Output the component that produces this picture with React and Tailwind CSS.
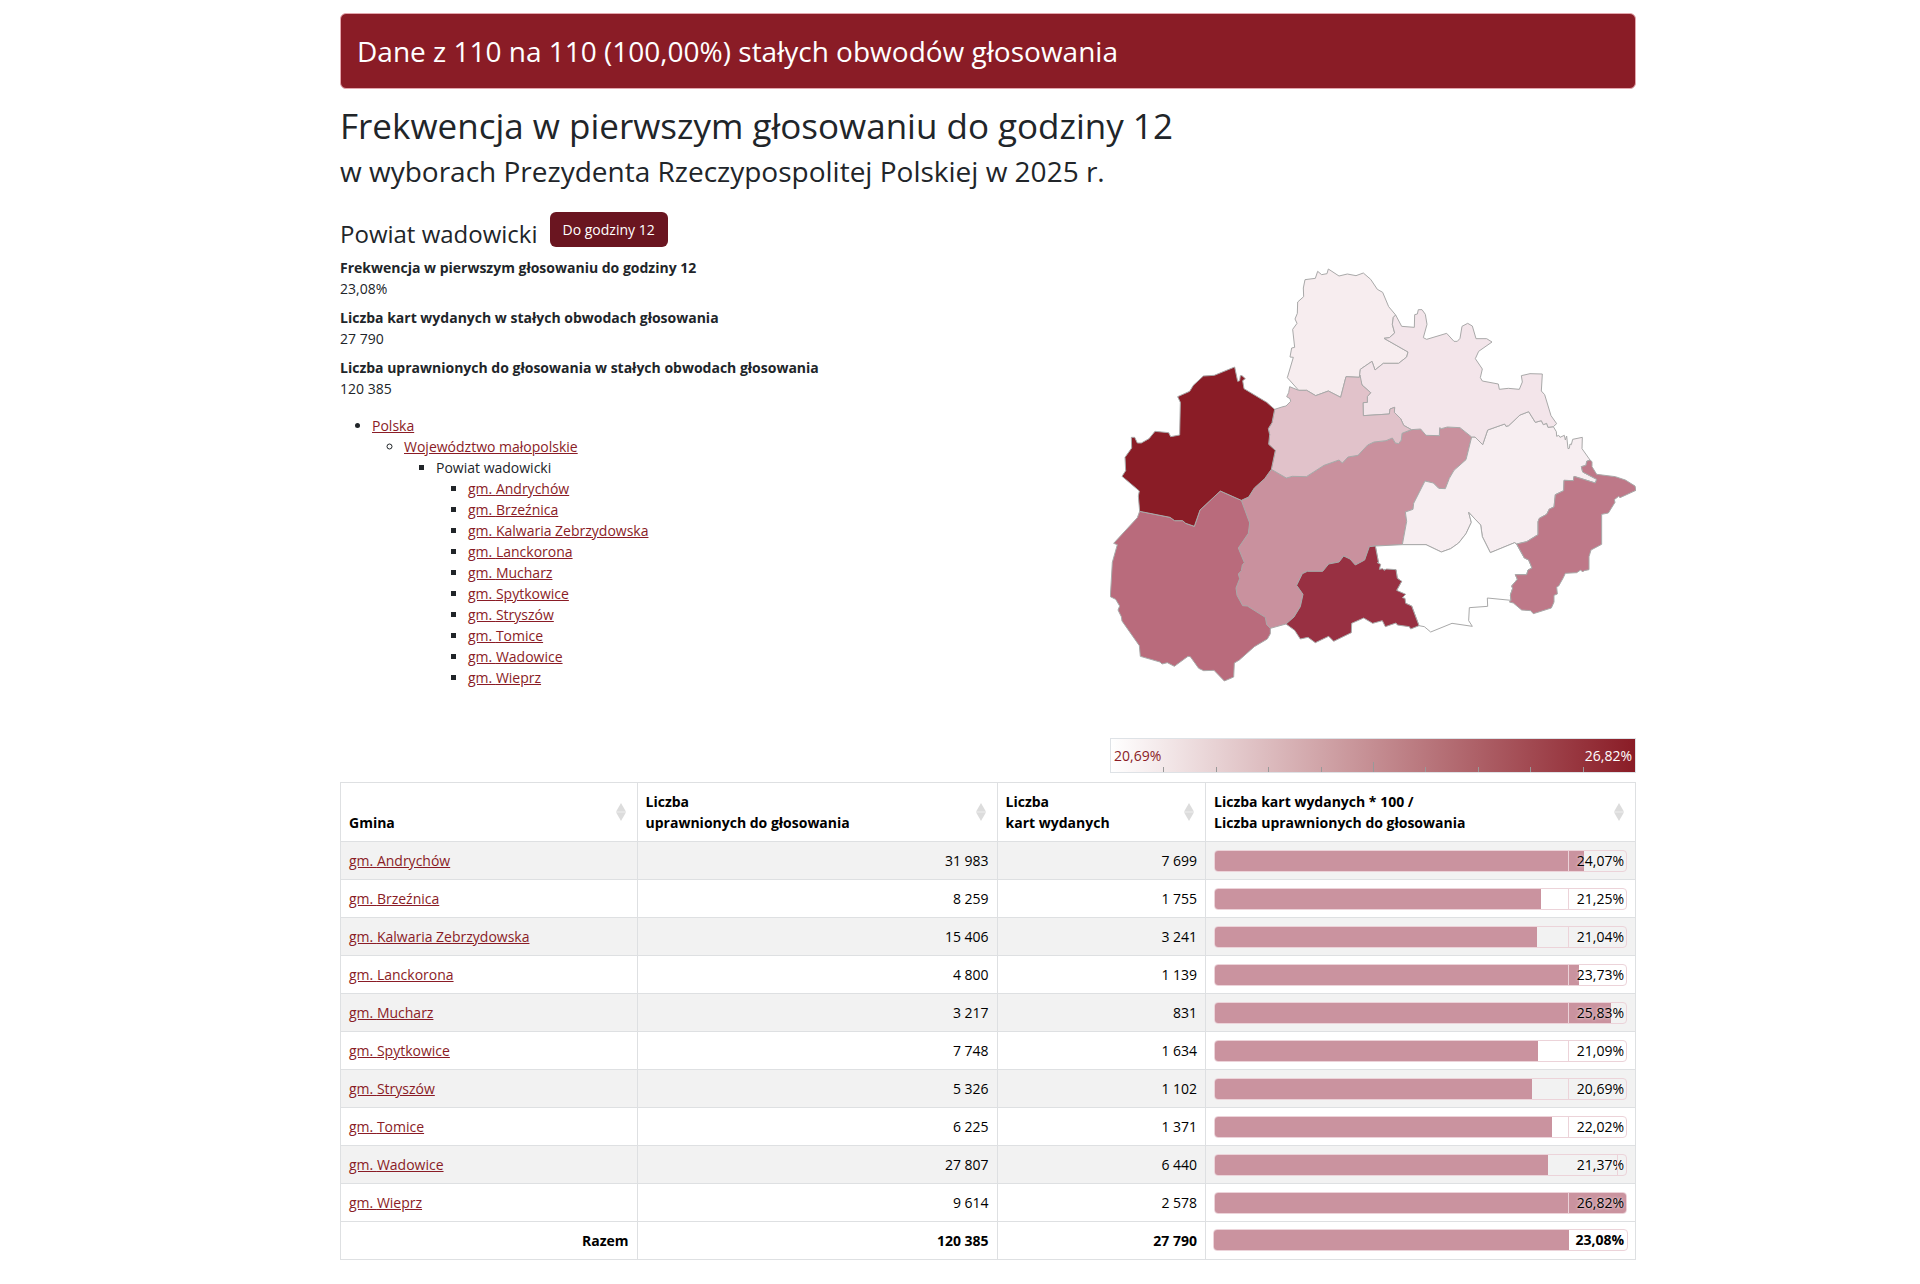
import React from "react";

// fill is the drawn bar length where it differs from the turnout
const gminy = [
  { name: "Andrychów", eligible: "31 983", cards: "7 699", turnout: 24.07 },
  { name: "Brzeźnica", eligible: "8 259", cards: "1 755", turnout: 21.25 },
  { name: "Kalwaria Zebrzydowska", eligible: "15 406", cards: "3 241", turnout: 21.04 },
  { name: "Lanckorona", eligible: "4 800", cards: "1 139", turnout: 23.73 },
  { name: "Mucharz", eligible: "3 217", cards: "831", turnout: 25.83 },
  { name: "Spytkowice", eligible: "7 748", cards: "1 634", turnout: 21.09 },
  { name: "Stryszów", eligible: "5 326", cards: "1 102", turnout: 20.69 },
  { name: "Tomice", eligible: "6 225", cards: "1 371", turnout: 22.02 },
  { name: "Wadowice", eligible: "27 807", cards: "6 440", turnout: 21.37, fill: 21.73 },
  { name: "Wieprz", eligible: "9 614", cards: "2 578", turnout: 26.82 },
];

const summary = [
  { label: "Frekwencja w pierwszym głosowaniu do godziny 12", value: "23,08%" },
  { label: "Liczba kart wydanych w stałych obwodach głosowania", value: "27 790" },
  {
    label: "Liczba uprawnionych do głosowania w stałych obwodach głosowania",
    value: "120 385",
  },
];

const maxTurnout = 26.82;

const formatPercent = (value) => value.toFixed(2).replace(".", ",") + "%";

// neighbours share their border points, later shapes cover earlier ones
const regions = [
  {
    name: "Spytkowice",
    fill: "#f7edef",
    points:
      "596,391 562,353 580,292 570,291 575,264 584,262 578,208 591,190 585,177 592,160 593,126 611,110 610,84 615,59 646,55 653,34 665,44 681,41 685,27 717,48 742,42 768,47 790,39 812,58 832,88 848,97 866,140 887,165 880,172 877,193 884,219 868,233 852,235 924,276 920,291 896,310 850,310 825,330 816,304 781,328 778,352 738,350 722,412 685,393 647,407 620,391",
  },
  {
    name: "Wadowice",
    fill: "#c9919e",
    points:
      "514,628 559,654 577,649 619,650 672,616 717,600 727,609 744,591 774,586 803,555 822,546 858,542 877,534 886,549 896,551 904,540 906,520 934,509 962,507 978,526 1018,527 1019,503 1024,506 1042,501 1080,503 1115,531 1098,599 1062,631 1048,655 1036,686 1016,685 1000,669 975,663 941,730 939,748 916,756 920,784 907,854 826,858 808,860 794,900 766,915 750,897 731,888 717,906 686,912 668,934 622,934 607,941 590,976 609,1003 601,1040 582,1071 558,1092 511,1105 440,1100 380,1000 424,721 446,711 463,684 494,656",
  },
  {
    name: "Kalwaria Zebrzydowska",
    fill: "#f7eef1",
    points:
      "1115,531 1125,531 1148,554 1163,510 1214,492 1218,499 1226,497 1260,465 1286,455 1306,487 1324,482 1330,494 1340,490 1344,502 1360,500 1369,515 1370,529 1376,526 1380,532 1393,526 1396,540 1400,528 1404,566 1408,565 1410,552 1414,554 1418,538 1447,532 1446,566 1470,600 1460,604 1458,616 1444,620 1448,636 1490,658 1486,669 1422,649 1420,662 1392,661 1391,692 1366,704 1362,741 1348,747 1340,763 1318,775 1314,785 1314,824 1280,845 1250,852 1244,848 1171,878 1147,830 1142,795 1106,757 1114,787 1098,821 1076,849 1052,866 1024,876 978,854 907,854 920,784 916,756 939,748 941,730 975,663 1000,669 1016,685 1036,686 1048,655 1062,631 1098,599",
  },
  {
    name: "Brzeźnica",
    fill: "#f3e5ea",
    points:
      "778,352 781,328 816,304 825,330 850,310 896,310 920,291 924,276 852,235 868,233 884,219 877,193 880,172 887,165 905,199 943,202 944,164 952,162 955,149 966,149 976,163 981,193 970,233 980,238 1040,220 1062,244 1072,244 1080,235 1086,199 1103,190 1117,198 1128,236 1160,236 1176,246 1136,274 1126,296 1147,327 1141,353 1147,363 1195,372 1198,388 1225,385 1258,388 1267,366 1264,347 1290,341 1327,342 1324,393 1334,404 1353,467 1370,491 1360,500 1344,502 1340,490 1330,494 1324,482 1306,487 1286,455 1260,465 1226,497 1218,499 1214,492 1163,510 1148,554 1125,531 1115,531 1080,503 1042,501 1024,506 1019,503 1018,527 978,526 962,507 934,509 911,496 902,476 883,457 884,442 870,447 868,462 790,467 789,428 802,427 802,410 812,398 786,375",
  },
  {
    name: "Tomice",
    fill: "#e1c2ca",
    points:
      "524,448 549,440 558,438 572,424 570,416 560,410 566,398 569,380 596,391 620,391 647,407 685,393 722,412 738,350 778,352 780,345 786,375 812,398 802,410 802,427 789,428 790,467 868,462 870,447 884,442 883,457 902,476 911,496 934,509 906,520 904,540 896,551 886,549 877,534 858,542 822,546 803,555 774,586 744,591 727,609 717,600 672,616 619,650 577,649 559,654 514,628 526,571 506,553 509,524 505,506 516,488",
  },
  {
    name: "Andrychów",
    fill: "#b96b7c",
    points:
      "119,754 112,773 41,850 52,854 37,907 31,1010 47,1018 59,1038 54,1050 64,1070 66,1083 118,1157 121,1189 180,1206 186,1212 202,1208 223,1219 264,1189 271,1190 296,1225 311,1232 342,1231 373,1263 401,1251 403,1209 418,1200 463,1160 502,1137 511,1121 511,1105 500,1094 496,1072 442,1038 428,1037 411,1006 408,984 419,956 415,942 424,932 427,914 433,908 415,864 445,820 449,789 424,721 361,693 300,750 283,799 257,790 248,782 224,782 210,772",
  },
  {
    name: "Wieprz",
    fill: "#8a1c26",
    points:
      "119,754 115,708 118,693 66,649 77,632 75,592 95,564 94,532 104,532 112,549 124,549 147,536 165,514 206,518 212,530 239,525 241,427 233,410 269,394 280,376 310,348 343,346 404,321 413,364 419,362 421,347 426,347 436,356 428,362 432,386 500,427 524,448 516,488 505,506 509,524 506,553 526,571 514,628 494,656 463,684 446,711 424,721 361,693 300,750 283,799 257,790 248,782 224,782 210,772",
  },
  {
    name: "Stryszów",
    fill: "#ffffff",
    points:
      "826,858 907,854 978,854 1024,876 1052,866 1076,849 1098,821 1114,787 1106,757 1142,795 1147,830 1171,878 1244,848 1250,853 1273,894 1286,900 1296,924 1284,930 1280,944 1246,944 1252,958 1235,978 1238,985 1231,1005 1233,1021 1162,1014 1163,1039 1108,1043 1106,1082 1117,1099 1056,1090 992,1116 973,1100 957,1097 935,1038 917,1030 890,991 905,964 892,955 888,929 838,928 835,905",
  },
  {
    name: "Mucharz",
    fill: "#983042",
    points:
      "826,858 835,905 832,908 842,913 838,928 848,926 852,931 860,927 888,929 892,955 905,964 890,991 917,1003 907,1013 915,1015 917,1030 935,1038 957,1097 932,1107 928,1100 892,1095 888,1089 856,1100 847,1082 818,1090 791,1074 755,1090 754,1118 701,1144 686,1129 646,1148 624,1132 601,1137 584,1111 558,1092 582,1071 601,1040 609,1003 590,976 607,941 622,934 668,934 686,912 717,906 731,888 750,897 766,915 794,900 808,860",
  },
  {
    name: "Lanckorona",
    fill: "#be7888",
    points:
      "1470,600 1476,605 1476,620 1490,643 1546,650 1576,660 1605,678 1608,691 1560,713 1556,709 1543,719 1545,727 1525,759 1505,763 1505,853 1473,870 1467,890 1467,929 1452,932 1448,936 1442,930 1430,938 1396,940 1390,953 1376,978 1370,981 1372,1002 1362,1006 1362,1026 1354,1044 1300,1061 1292,1052 1265,1050 1240,1029 1228,1026 1233,1021 1231,1005 1238,985 1235,978 1252,958 1246,944 1280,944 1284,930 1296,924 1286,900 1273,894 1250,852 1280,845 1314,824 1314,785 1318,775 1340,763 1348,747 1362,741 1366,704 1391,692 1392,661 1420,662 1422,649 1486,669 1490,658 1448,636 1444,620 1458,616 1460,604",
  },
];

const CountyMap = () => (
  <svg
    viewBox="30 0 1578 1290"
    className="block w-full"
    role="img"
    aria-label="Mapa powiatu wadowickiego"
  >
    {regions.map((region) => (
      <polygon
        key={region.name}
        points={region.points}
        fill={region.fill}
        stroke="#a9a9a9"
        strokeWidth="3"
        strokeLinejoin="round"
      />
    ))}
  </svg>
);

const Legend = () => (
  <div className="relative flex h-[35px] items-center justify-between border border-[#dee2e6] bg-linear-to-r/srgb from-white to-[#8a1c26] px-[3px]">
    <span className="text-[#8a1c26]">20,69%</span>
    <span className="text-white">26,82%</span>
    <div className="absolute inset-0 grid grid-cols-10 items-end">
      <span />
      {[1, 2, 3, 4, 5, 6, 7, 8, 9].map((tick) => (
        <span
          key={tick}
          className={
            tick === 5
              ? "h-2.5 border-l border-[#999]"
              : "h-[5px] border-l border-[#999]"
          }
        />
      ))}
    </div>
  </div>
);

const SortIcon = () => (
  <svg
    viewBox="0 0 14 20"
    className="mr-px h-5 w-3.5 shrink-0 self-center"
    fill="#dcdcdc"
  >
    <path d="M7 1l5 8.8H2z" />
    <path d="M7 19l5-8.8H2z" />
  </svg>
);

const HeaderCell = ({ lines, className }) => (
  <th className={`border border-[#dee0e2] p-2 text-left align-bottom ${className}`}>
    <div className="flex min-h-[42px] items-end justify-between">
      <span>
        {lines.map((line) => (
          <span key={line} className="block">
            {line}
          </span>
        ))}
      </span>
      <SortIcon />
    </div>
  </th>
);

const TurnoutBar = ({ value, fill = value, className, labelClass }) => (
  <div
    className={`relative h-[22px] overflow-hidden rounded-sm border border-[#ecd3d9] ${className}`}
  >
    <div
      className="h-full bg-[#ca939f]"
      style={{ width: `${(fill / maxTurnout) * 100}%` }}
    />
    <span
      className={`absolute inset-y-0 right-0 border-[#ecd3d9] text-right leading-5 text-shadow-[0_0_3px_#ffffff] ${labelClass}`}
    >
      {formatPercent(value)}
    </span>
  </div>
);

const Link = ({ children }) => (
  <a href="#" className="text-[#8a1c26] underline">
    {children}
  </a>
);

const App = () => {
  return (
    <div className="bg-white pt-[13px] pb-6 pl-14 font-['Open_Sans',sans-serif] text-[14px] leading-[21px] text-[#212529]">
      <main className="mx-auto max-w-[1320px] px-3">
        <div className="rounded-md border border-[#e3a6ad] bg-[#8a1c26] p-4 text-[28px] leading-[42px] text-white">
          Dane z 110 na 110 (100,00%) stałych obwodów głosowania
        </div>

        <h1 className="mt-4 text-[35px] leading-[42px]">
          Frekwencja w pierwszym głosowaniu do godziny 12
          <small className="block text-[28px] leading-[48px]">
            w wyborach Prezydenta Rzeczypospolitej Polskiej w 2025 r.
          </small>
        </h1>

        <div className="mt-[17px] grid grid-cols-12 gap-x-6">
          <section className="col-span-7">
            <div className="mb-2.5 flex items-end gap-3">
              <h2 className="text-[24px] leading-[26px]">Powiat wadowicki</h2>
              <button className="rounded-md bg-[#6a1520] px-[13px] py-[7px] text-white">
                Do godziny 12
              </button>
            </div>
            <dl>
              {summary.map((item) => (
                <div key={item.label} className="mb-2">
                  <dt className="font-bold">{item.label}</dt>
                  <dd>{item.value}</dd>
                </div>
              ))}
            </dl>
            <ul className="mt-4 list-disc pl-8">
              <li>
                <Link>Polska</Link>
                <ul className="list-[circle] pl-8">
                  <li>
                    <Link>Województwo małopolskie</Link>
                    <ul className="list-[square] pl-8">
                      <li>
                        Powiat wadowicki
                        <ul className="list-[square] pl-8">
                          {gminy.map((gmina) => (
                            <li key={gmina.name}>
                              <Link>gm. {gmina.name}</Link>
                            </li>
                          ))}
                        </ul>
                      </li>
                    </ul>
                  </li>
                </ul>
              </li>
            </ul>
          </section>
          <section className="col-span-5 flex flex-col gap-12 pt-12">
            <CountyMap />
            <Legend />
          </section>
        </div>

        <table className="mt-[9px] w-full table-fixed border-collapse text-black">
          <thead>
            <tr>
              <HeaderCell className="w-[22.9%]" lines={["Gmina"]} />
              <HeaderCell
                className="w-[27.8%]"
                lines={["Liczba", "uprawnionych do głosowania"]}
              />
              <HeaderCell className="w-[16.1%]" lines={["Liczba", "kart wydanych"]} />
              <HeaderCell
                className="w-[33.2%]"
                lines={["Liczba kart wydanych * 100 /", "Liczba uprawnionych do głosowania"]}
              />
            </tr>
          </thead>
          <tbody>
            {gminy.map((gmina) => (
              <tr key={gmina.name} className="odd:bg-[#f2f2f2]">
                <td className="border border-[#dee0e2] p-2">
                  <Link>gm. {gmina.name}</Link>
                </td>
                <td className="border border-[#dee0e2] p-2 text-right">{gmina.eligible}</td>
                <td className="border border-[#dee0e2] p-2 text-right">{gmina.cards}</td>
                <td className="border border-[#dee0e2] p-2">
                  <TurnoutBar
                    value={gmina.turnout}
                    fill={gmina.fill}
                    className="-mb-px"
                    labelClass={
                      gmina.fill
                        ? "pr-[2px] before:absolute before:inset-y-0 before:right-2 before:border-l before:border-[#ecd3d9]"
                        : "w-[58px] border-l pr-[2px]"
                    }
                  />
                </td>
              </tr>
            ))}
          </tbody>
          <tfoot>
            <tr className="font-bold">
              <th className="border border-[#dee0e2] p-2 text-right">Razem</th>
              <td className="border border-[#dee0e2] p-2 text-right">120 385</td>
              <td className="border border-[#dee0e2] p-2 text-right">27 790</td>
              <td className="border border-[#dee0e2] p-2">
                <TurnoutBar value={23.08} className="-mx-px -mt-px" labelClass="pr-[3px]" />
              </td>
            </tr>
          </tfoot>
        </table>
      </main>
    </div>
  );
};

export default App;
